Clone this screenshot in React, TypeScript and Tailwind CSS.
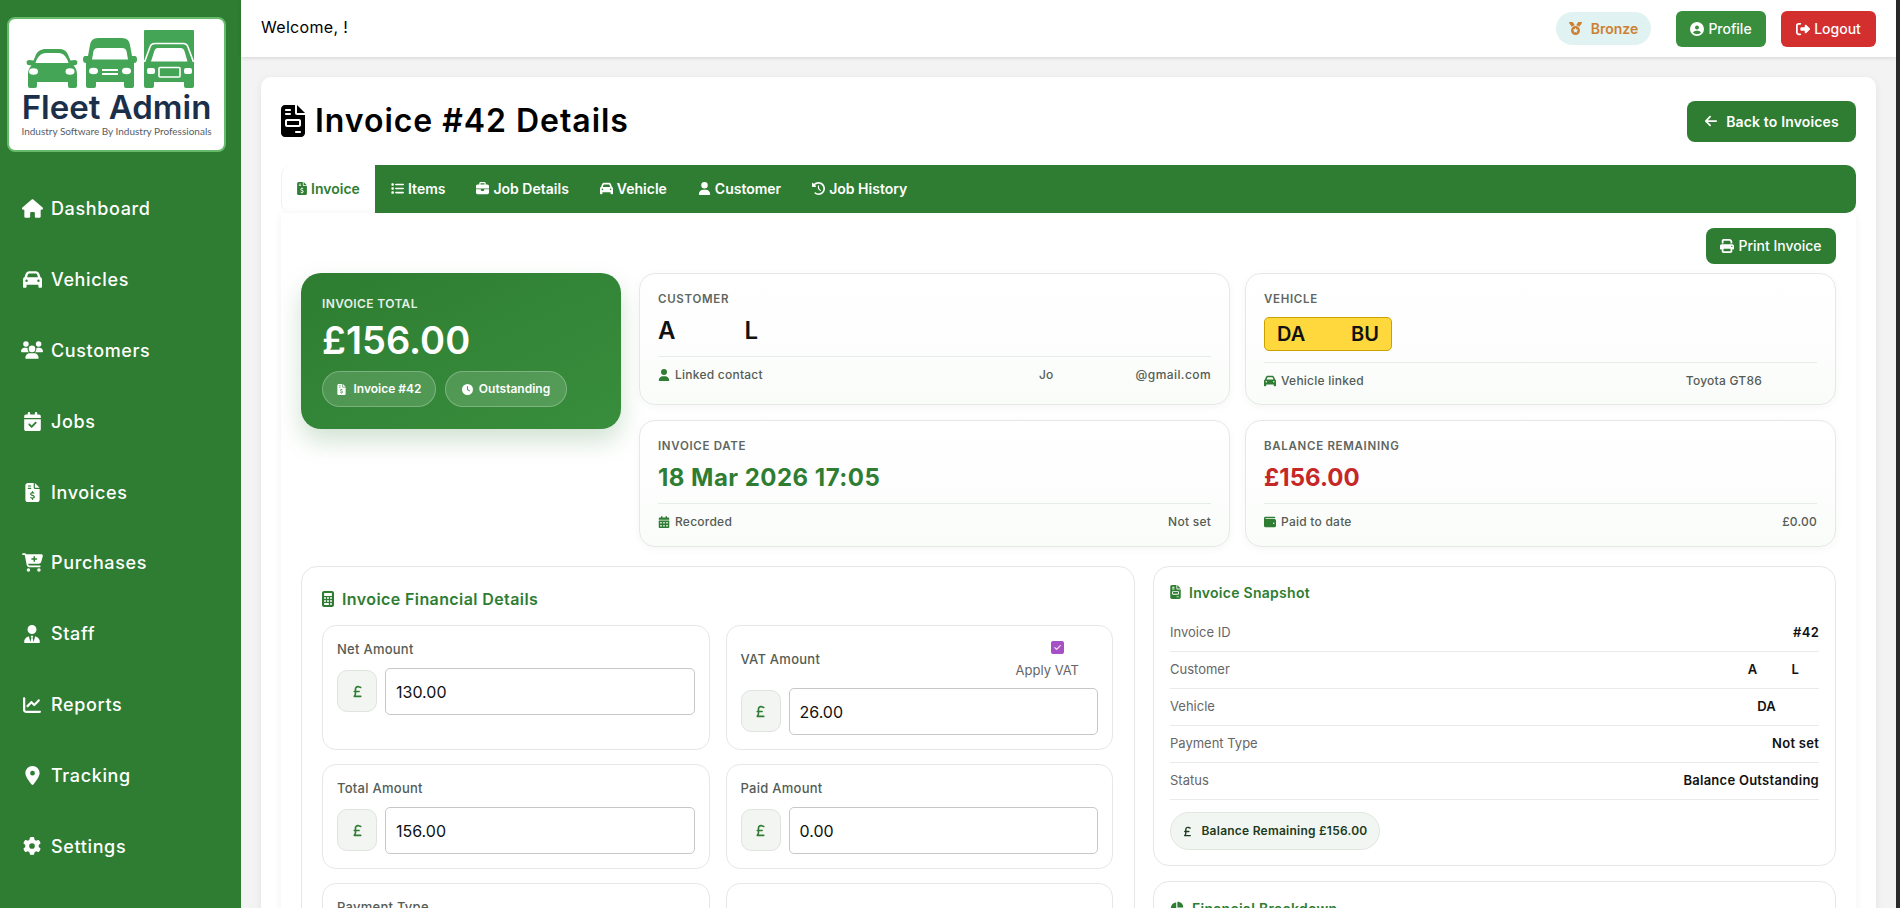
import type { ReactNode } from 'react';
import type { IconType } from 'react-icons';
import {
  FaArrowLeft,
  FaBriefcase,
  FaCalculator,
  FaCalendarCheck,
  FaCalendarDays,
  FaCar,
  FaCartPlus,
  FaChartLine,
  FaChartPie,
  FaCircleUser,
  FaClock,
  FaClockRotateLeft,
  FaFileInvoice,
  FaFileInvoiceDollar,
  FaGear,
  FaHouse,
  FaList,
  FaLocationDot,
  FaMedal,
  FaPrint,
  FaRightFromBracket,
  FaSterlingSign,
  FaUser,
  FaUserTie,
  FaUsers,
  FaWallet,
} from 'react-icons/fa6';

const navItems: { label: string; icon: IconType; size: number }[] = [
  { label: 'Dashboard', icon: FaHouse, size: 21 },
  { label: 'Vehicles', icon: FaCar, size: 19 },
  { label: 'Customers', icon: FaUsers, size: 22 },
  { label: 'Jobs', icon: FaCalendarCheck, size: 19 },
  { label: 'Invoices', icon: FaFileInvoiceDollar, size: 19 },
  { label: 'Purchases', icon: FaCartPlus, size: 21 },
  { label: 'Staff', icon: FaUserTie, size: 18 },
  { label: 'Reports', icon: FaChartLine, size: 18 },
  { label: 'Tracking', icon: FaLocationDot, size: 19 },
  { label: 'Settings', icon: FaGear, size: 18 },
];

const tabs: { label: string; icon: IconType }[] = [
  { label: 'Items', icon: FaList },
  { label: 'Job Details', icon: FaBriefcase },
  { label: 'Vehicle', icon: FaCar },
  { label: 'Customer', icon: FaUser },
  { label: 'Job History', icon: FaClockRotateLeft },
];

function LogoVehicles() {
  return (
    <svg viewBox="0 0 168 58" className="self-start ml-[17px] w-[168px] h-[58px] shrink-0">
      {/* car */}
      <path
        fill="#45a557"
        d="M9 27C11 21 15 19 20 19H33C38 19 41 21 43 27L44.5 30.5L49 30C52 30 52 34 50 35L47.5 35.5C50 38 51 41 51 44V56Q51 58 49 58H44Q42 58 42 56V52H11V56Q11 58 9 58H4Q2 58 2 56V44C2 41 3 38 5.5 35.5L2 35C0 34 0 30 3 30L7.5 30.5Z"
      />
      <path fill="#fff" d="M9.5 33C11 27 15 23 20 23H33C37 23 41 27 42.5 33Z" />
      <ellipse cx="7.5" cy="41.5" rx="4.5" ry="3.2" fill="#fff" />
      <ellipse cx="44" cy="41.5" rx="4.5" ry="3.2" fill="#fff" />
      {/* van */}
      <path
        fill="#45a557"
        d="M62 26L64 15Q65 8 72 8H96Q103 8 104 15L106 26H109Q111 26 111 29.5Q111 33 108 33V56Q108 58 106 58H100Q98 58 98 56V52H70V56Q70 58 68 58H62Q60 58 60 56V33Q57 33 57 29.5Q57 26 59 26Z"
      />
      <path fill="#fff" d="M66 29.5L67.5 21Q68.3 18 72 18H96Q99.7 18 100.5 21L102 29.5Z" />
      <ellipse cx="67.5" cy="41" rx="4.5" ry="3.2" fill="#fff" />
      <ellipse cx="100.5" cy="41" rx="4.5" ry="3.2" fill="#fff" />
      <rect x="76" y="39" width="16" height="2" fill="#fff" />
      <rect x="76" y="43" width="16" height="2" fill="#fff" />
      {/* truck */}
      <path
        fill="#45a557"
        d="M119 0H167Q168 0 168 1V56Q168 58 166 58H160Q158 58 158 56V52H128V56Q128 58 126 58H120Q118 58 118 56V1Q118 0 119 0Z"
      />
      <path d="M118.5 32L124 17Q125 13.5 129 13.5H157Q161 13.5 162 17L167.5 32" fill="none" stroke="#fff" strokeWidth="1.6" />
      <path fill="#fff" d="M125 31.5L128.5 20.5Q129.2 18 131.5 18H155Q157.5 18 158.3 20.5L161.5 31.5Z" />
      <rect x="121" y="38" width="8" height="6" rx="2" fill="#fff" />
      <rect x="158" y="38" width="8" height="6" rx="2" fill="#fff" />
      <rect x="133" y="37.5" width="21" height="9.5" rx="1" fill="none" stroke="#fff" strokeWidth="1.6" />
    </svg>
  );
}

function Sidebar() {
  return (
    <aside className="w-[241px] shrink-0 bg-[#2e7d32] flex flex-col">
      <div className="ml-[7px] mt-[17px] w-[219px] h-[135px] bg-white border-2 border-[#66bb6a] rounded-lg flex flex-col items-center pt-[11px]">
        <LogoVehicles />
        <div className="pt-[1px] text-[33px] leading-[36px] font-semibold text-[#1b2f4b] whitespace-nowrap">Fleet Admin</div>
        <div className="text-[10px] leading-[13px] text-[#565d66] font-['Lato',sans-serif] whitespace-nowrap">Industry Software By Industry Professionals</div>
      </div>
      <nav className="mt-[21px] flex flex-col">
        {navItems.map(({ label, icon: Icon, size }) => (
          <div key={label} className="h-[70.9px] flex items-center pl-[20px] text-white">
            <span className="w-[24px] flex justify-center">
              <Icon size={size} />
            </span>
            <span className="ml-[7px] text-[18px] font-medium tracking-[0.035em]">{label}</span>
          </div>
        ))}
      </nav>
    </aside>
  );
}

function Header() {
  return (
    <header className="h-[57px] shrink-0 bg-white shadow-[0_1px_4px_rgba(0,0,0,0.12)] flex items-center pl-[20px] pr-[20px] relative z-10">
      <span className="pb-[3px] text-[16px] text-black tracking-[0.02em]">Welcome, !</span>
      <div className="ml-auto flex items-center">
        <span className="h-[33px] w-[95px] rounded-full bg-[#e0f2f1] text-[#cd7f32] text-[14px] font-semibold flex items-center justify-center gap-[9px]">
          <FaMedal size={13} />
          Bronze
        </span>
        <button className="ml-[25px] h-[36px] w-[90px] rounded-md bg-[#388e3c] text-white text-[14px] font-medium flex items-center justify-center gap-[4px]">
          <FaCircleUser size={14} />
          Profile
        </button>
        <button className="ml-[15px] h-[36px] w-[95px] rounded-md bg-[#d32f2f] text-white text-[14px] font-medium flex items-center justify-center gap-[4px]">
          <FaRightFromBracket size={14} />
          Logout
        </button>
      </div>
    </header>
  );
}

function InfoCard({
  label,
  children,
  footIcon: FootIcon,
  footLabel,
  footRight,
  className,
}: {
  label: string;
  children: ReactNode;
  footIcon: IconType;
  footLabel: string;
  footRight: ReactNode;
  className: string;
}) {
  return (
    <div className={`rounded-[16px] border border-[#e4e9e4] bg-gradient-to-b from-white to-[#fafcfa] shadow-[0_2px_8px_rgba(0,0,0,0.04)] px-[18px] flex flex-col ${className}`}>
      <div className="text-[11.5px] leading-[14px] font-semibold tracking-[0.06em] text-[#5f665f]">{label}</div>
      {children}
      <div className="border-t border-[#e8ece8] flex items-center justify-between text-[12px] font-medium tracking-[0.02em] text-[#555c55] pt-[9px]">
        <span className="flex items-center gap-[5px]">
          <span className="text-[#2e7d32]">
            <FootIcon size={12} />
          </span>
          {footLabel}
        </span>
        {footRight}
      </div>
    </div>
  );
}

function AmountField({ label, value, apply }: { label: string; value: string; apply?: boolean }) {
  return (
    <div className="rounded-[14px] border border-[#e4e9e4] bg-white px-[14px] py-[14px]">
      {apply ? (
        <div className="h-[40px] mb-[8px] flex items-center justify-between pr-[19px]">
          <span className="text-[13px] font-medium tracking-[0.02em] text-[#555c55]">{label}</span>
          <label className="flex flex-col items-center gap-[6px]">
            <span className="w-[13px] h-[13px] rounded-[2px] bg-[#a74fc4] text-white flex items-center justify-center text-[10px] leading-none ml-[20px]">✓</span>
            <span className="text-[13px] leading-[20px] text-[#666]">Apply VAT</span>
          </label>
        </div>
      ) : (
        <div className="h-[18px] leading-[18px] mb-[10px] text-[13px] font-medium tracking-[0.02em] text-[#555c55]">{label}</div>
      )}
      <div className="flex items-start gap-[8px]">
        <span className="mt-[2px] w-[40px] h-[42px] shrink-0 rounded-[10px] bg-[#f2f5f2] border border-[#dfe4df] text-[#2e7d32] flex items-center justify-center">
          <FaSterlingSign size={13} />
        </span>
        <input
          readOnly
          value={value}
          className="flex-1 min-w-0 h-[47px] rounded-[5px] border border-[#c6c8c6] bg-white px-[10px] text-[16px] text-[#111]"
        />
      </div>
    </div>
  );
}

function SnapshotRow({ label, children }: { label: string; children: ReactNode }) {
  return (
    <div className="h-[37px] border-b border-[#e8ece8] flex items-center justify-between text-[13px]">
      <span className="text-[#666]">{label}</span>
      <span className="font-semibold tracking-[0.02em] text-[#111] flex">{children}</span>
    </div>
  );
}

export default function App() {
  return (
    <div className="h-screen w-full overflow-hidden flex bg-[#f3f3f3] text-[#111] font-['Inter',sans-serif]">
      <Sidebar />
      <div className="flex-1 min-w-0 flex flex-col">
        <Header />
        <main className="flex-1 min-h-0 overflow-hidden px-[20px] pt-[20px]">
          <div className="bg-white rounded-[10px] shadow-[0_2px_8px_rgba(0,0,0,0.07)] px-[20px] pt-[24px] pb-[40px]">
            <div className="flex items-center justify-between h-[41px]">
              <h1 className="flex items-center gap-[10px] pb-[1px] text-[32px] font-semibold text-black tracking-[0.03em]">
                <FaFileInvoice className="w-[24px] h-[32px]" />
                Invoice #42 Details
              </h1>
              <button className="w-[169px] h-[41px] pb-[1px] rounded-lg bg-[#2e7d32] text-white text-[14px] font-semibold tracking-[0.01em] flex items-center justify-center gap-[8px]">
                <FaArrowLeft size={14} />
                Back to Invoices
              </button>
            </div>

            <div className="mt-[23px] h-[48px] flex">
              <div className="w-[94px] pb-[1px] flex items-center justify-center gap-[4px] rounded-l-[10px] border-l border-[#eef2ee] text-[#2e7d32] text-[14px] font-semibold">
                <FaFileInvoiceDollar className="w-[10px] h-[13px]" />
                Invoice
              </div>
              <div className="flex-1 pb-[1px] bg-[#2e7d32] rounded-r-[10px] flex items-center pl-[16px] gap-[31px] text-white text-[14px] font-semibold">
                {tabs.map(({ label, icon: Icon }) => (
                  <span key={label} className="flex items-center gap-[4px]">
                    <Icon size={13} />
                    {label}
                  </span>
                ))}
              </div>
            </div>

            <div className="rounded-b-[10px] bg-white shadow-[0_1px_8px_rgba(0,0,0,0.06)] px-[20px] pt-[15px] pb-[40px]">
              <div className="flex justify-end">
                <button className="w-[130px] h-[36px] pb-[1px] rounded-lg bg-[#2e7d32] text-white text-[14px] font-medium flex items-center justify-center gap-[4px]">
                  <FaPrint size={14} />
                  Print Invoice
                </button>
              </div>

              <div className="mt-[9px] flex gap-[18px] items-start">
                <div className="w-[320px] h-[156px] shrink-0 rounded-[20px] bg-gradient-to-br from-[#2e7d32] to-[#388e3c] shadow-[0_12px_24px_rgba(46,125,50,0.22)] px-[21px] pt-[24px] text-white">
                  <div className="text-[12px] leading-[14px] font-semibold tracking-[0.03em] text-[#e6f0e6]">INVOICE TOTAL</div>
                  <div className="mt-[5px] text-[38px] leading-[48px] font-semibold">£156.00</div>
                  <div className="mt-[7px] flex gap-[9px]">
                    <span className="h-[36px] w-[114px] rounded-full bg-white/15 border border-white/25 flex items-center justify-center gap-[6px] text-[12px] font-semibold">
                      <FaFileInvoiceDollar size={11} />
                      Invoice #42
                    </span>
                    <span className="h-[36px] w-[122px] rounded-full bg-white/15 border border-white/25 flex items-center justify-center gap-[6px] text-[12px] font-semibold">
                      <FaClock size={11} />
                      Outstanding
                    </span>
                  </div>
                </div>

                <div className="flex-1 grid grid-cols-2 gap-x-[15px] gap-y-[15px]">
                  <InfoCard
                    label="CUSTOMER"
                    className="h-[132px] pt-[18px]"
                    footIcon={FaUser}
                    footLabel="Linked contact"
                    footRight={
                      <span className="flex">
                        <span>Jo</span>
                        <span className="w-[82px]" />
                        <span className="tracking-[0.035em]">@gmail.com</span>
                      </span>
                    }
                  >
                    <div className="h-[50px] flex items-center text-[24px] font-semibold text-[#111]">
                      <span>A</span>
                      <span className="w-[69px]" />
                      <span>L</span>
                    </div>
                  </InfoCard>
                  <InfoCard
                    label="VEHICLE"
                    className="h-[132px] pt-[18px]"
                    footIcon={FaCar}
                    footLabel="Vehicle linked"
                    footRight={<span className="mr-[55px]">Toyota GT86</span>}
                  >
                    <div className="h-[56px] flex items-center">
                      <div className="w-[128px] h-[34px] rounded-[5px] bg-[#ffd83d] border border-[#c9a200] flex items-center justify-between px-[12px] text-[20px] font-semibold text-[#111]">
                        <span>DA</span>
                        <span>BU</span>
                      </div>
                    </div>
                  </InfoCard>
                  <InfoCard
                    label="INVOICE DATE"
                    className="h-[127px] pt-[18px]"
                    footIcon={FaCalendarDays}
                    footLabel="Recorded"
                    footRight={<span>Not set</span>}
                  >
                    <div className="h-[50px] flex items-center text-[24px] font-bold tracking-[0.02em] text-[#2e7d32]">18 Mar 2026 17:05</div>
                  </InfoCard>
                  <InfoCard
                    label="BALANCE REMAINING"
                    className="h-[127px] pt-[18px]"
                    footIcon={FaWallet}
                    footLabel="Paid to date"
                    footRight={<span>£0.00</span>}
                  >
                    <div className="h-[50px] flex items-center text-[24px] font-bold text-[#c62828]">£156.00</div>
                  </InfoCard>
                </div>
              </div>

              <div className="mt-[19px] flex gap-[18px] items-start">
                <section className="w-[834px] shrink-0 rounded-[16px] border border-[#e4e9e4] bg-white pl-[20px] pr-[21px] pt-[20px] pb-[20px]">
                  <h2 className="h-[24px] mb-[14px] flex items-center gap-[8px] text-[16px] font-semibold tracking-[0.025em] text-[#2e7d32]">
                    <FaCalculator className="w-[12px] h-[16px]" />
                    Invoice Financial Details
                  </h2>
                  <div className="grid grid-cols-2 gap-x-[16px] gap-y-[14px]">
                    <AmountField label="Net Amount" value="130.00" />
                    <AmountField label="VAT Amount" value="26.00" apply />
                    <AmountField label="Total Amount" value="156.00" />
                    <AmountField label="Paid Amount" value="0.00" />
                    <AmountField label="Payment Type" value="" />
                    <div className="rounded-[14px] border border-[#e4e9e4] bg-white h-[100px]" />
                  </div>
                </section>

                <div className="flex-1 min-w-0 flex flex-col gap-[15px]">
                  <section className="rounded-[16px] border border-[#e4e9e4] bg-white pl-[16px] pr-[16px] pt-[14px] pb-[15px]">
                    <h2 className="h-[22px] mb-[12px] flex items-center gap-[8px] text-[14px] font-semibold tracking-[0.02em] text-[#2e7d32]">
                      <FaFileInvoice className="w-[11px] h-[14px]" />
                      Invoice Snapshot
                    </h2>
                    <SnapshotRow label="Invoice ID">#42</SnapshotRow>
                    <SnapshotRow label="Customer">
                      <span>A</span>
                      <span className="w-[34px]" />
                      <span>L</span>
                      <span className="w-[20px]" />
                    </SnapshotRow>
                    <SnapshotRow label="Vehicle">
                      <span>DA</span>
                      <span className="w-[43px]" />
                    </SnapshotRow>
                    <SnapshotRow label="Payment Type">Not set</SnapshotRow>
                    <SnapshotRow label="Status">Balance Outstanding</SnapshotRow>
                    <div className="mt-[12px] h-[38px] w-[210px] rounded-full bg-[#f2f6f2] border border-[#e0e6e0] flex items-center justify-center gap-[8px] text-[12px] font-semibold tracking-[0.02em] text-[#1e3a20]">
                      <FaSterlingSign size={11} />
                      Balance Remaining £156.00
                    </div>
                  </section>
                  <section className="rounded-[16px] border border-[#e4e9e4] bg-white pl-[16px] pr-[16px] pt-[15px] h-[200px]">
                    <h2 className="h-[22px] flex items-center gap-[8px] text-[14px] font-semibold tracking-[0.02em] text-[#2e7d32]">
                      <FaChartPie size={14} />
                      Financial Breakdown
                    </h2>
                  </section>
                </div>
              </div>
            </div>
          </div>
        </main>
      </div>
      <div className="w-[4px] shrink-0 bg-[#2a2a2a]" />
    </div>
  );
}
